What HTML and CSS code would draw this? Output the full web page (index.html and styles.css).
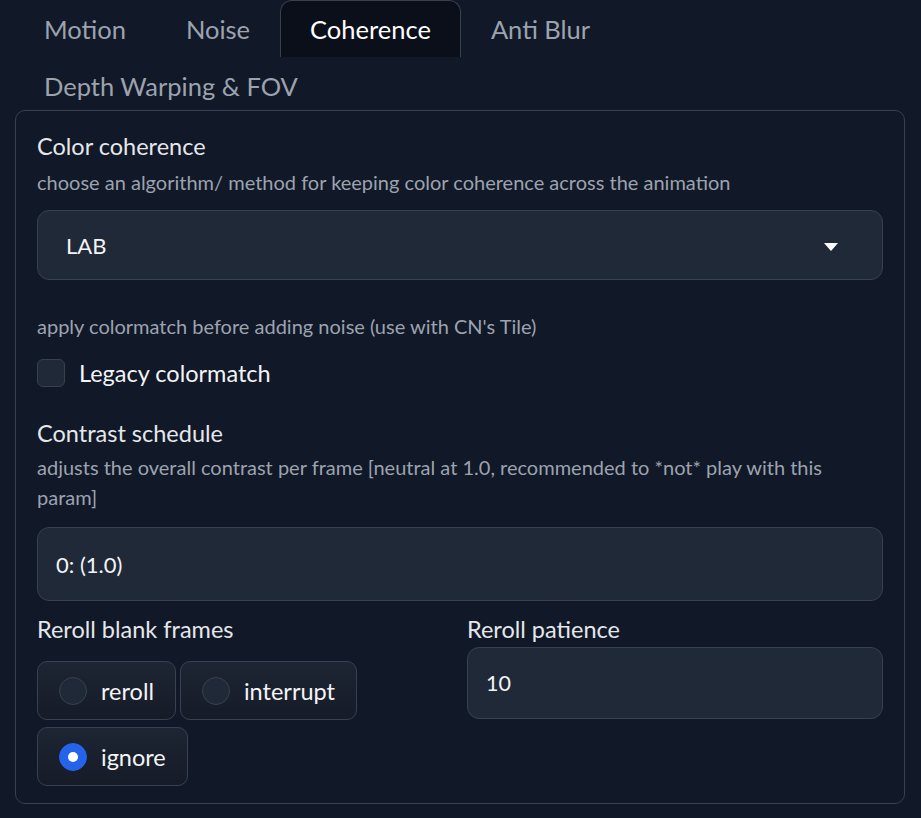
FILE: index.html
```html
<!DOCTYPE html>
<html lang="en">
<head>
<meta charset="utf-8">
<title>Coherence</title>
<link rel="stylesheet" href="styles.css">
</head>
<body>
<div class="tabs">
  <button class="tab">Motion</button>
  <button class="tab">Noise</button>
  <button class="tab selected">Coherence</button>
  <button class="tab">Anti Blur</button>
  <button class="tab">Depth Warping &amp; FOV</button>
</div>
<div class="panel">
  <div class="block">
    <div class="label">Color coherence</div>
    <div class="info">choose an algorithm/ method for keeping color coherence across the animation</div>
    <div class="dropdown">
      <span class="value">LAB</span>
      <svg class="caret" width="14" height="8" viewBox="0 0 14 8"><path d="M0 0 L14 0 L7 8 Z" fill="#ffffff"/></svg>
    </div>
  </div>
  <div class="block block-check">
    <div class="info">apply colormatch before adding noise (use with CN's Tile)</div>
    <label class="check-row"><span class="checkbox"></span><span class="check-text">Legacy colormatch</span></label>
  </div>
  <div class="block block-contrast">
    <div class="label">Contrast schedule</div>
    <div class="info">adjusts the overall contrast per frame [neutral at 1.0, recommended to *not* play with this param]</div>
    <div class="textbox">0: (1.0)</div>
  </div>
  <div class="row">
    <div class="col">
      <div class="label">Reroll blank frames</div>
      <div class="radios">
        <label class="radio-item"><span class="radio"></span><span>reroll</span></label>
        <label class="radio-item"><span class="radio"></span><span>interrupt</span></label>
        <label class="radio-item"><span class="radio on"></span><span>ignore</span></label>
      </div>
    </div>
    <div class="col">
      <div class="label">Reroll patience</div>
      <div class="number">10</div>
    </div>
  </div>
</div>
</body>
</html>
```

FILE: styles.css
```css
* { box-sizing: border-box; }
html, body { margin: 0; padding: 0; }
body {
  background: #111827;
  font-family: Lato, "Noto Sans", sans-serif;
  color: #e5e7eb;
  width: 921px;
  height: 818px;
  overflow: hidden;
}
.tabs {
  display: flex;
  flex-wrap: wrap;
  padding-left: 14px;
  margin-right: 16px;
  margin-bottom: -4px;
}
.tab {
  height: 57px;
  padding: 0 29px;
  background: transparent;
  border: 1px solid transparent;
  border-bottom: none;
  border-radius: 12px 12px 0 0;
  color: #9ca3af;
  font-family: inherit;
  font-size: 25.5px;
  cursor: pointer;
}
.tab.selected {
  background: #0b0f19;
  border-color: #374151;
  color: #ffffff;
}
.panel {
  margin: 0 16px 0 15px;
  border: 1px solid #374151;
  border-radius: 10px;
  padding: 20px 21px 17px;
}
.label {
  font-size: 23.5px;
  line-height: 30px;
  color: #e5e7eb;
}
.info {
  font-size: 20px;
  line-height: 30px;
  color: #9ca3af;
}
.block .label + .info { margin-top: 6px; }
.dropdown {
  margin-top: 13px;
  height: 70px;
  background: #1f2937;
  border: 1px solid #374151;
  border-radius: 12px;
  display: flex;
  align-items: center;
  justify-content: space-between;
  padding: 0 44px 0 28px;
  font-size: 22px;
  color: #f3f4f6;
}
.caret { display: block; margin-top: 3px; }
.block-check { margin-top: 31px; }
.check-row {
  display: flex;
  align-items: center;
  gap: 14px;
  margin-top: 18px;
  font-size: 23.5px;
  color: #f3f4f6;
}
.checkbox {
  width: 28px;
  height: 28px;
  border-radius: 6px;
  background: #1f2937;
  border: 1px solid #374151;
}
.block-contrast { margin-top: 31px; }
.block-contrast .label + .info { margin-top: 4px; }
.textbox {
  margin-top: 15px;
  height: 74px;
  background: #1f2937;
  border: 1px solid #374151;
  border-radius: 12px;
  display: flex;
  align-items: center;
  padding: 0 18px;
  font-size: 22px;
  color: #f3f4f6;
}
.row {
  display: grid;
  grid-template-columns: 408px 1fr;
  column-gap: 22px;
  margin-top: 13px;
}
.radios {
  display: flex;
  flex-wrap: wrap;
  gap: 7px 4px;
  margin-top: 17px;
}
.radio-item {
  display: flex;
  align-items: center;
  gap: 14px;
  height: 59px;
  padding: 0 21px;
  border: 1px solid #374151;
  border-radius: 10px;
  background: linear-gradient(#1e2533, #151b27);
  font-size: 23.5px;
  color: #f3f4f6;
}
.radio {
  width: 28px;
  height: 28px;
  border-radius: 50%;
  background: #1f2937;
  border: 1px solid #374151;
}
.radio.on {
  background: #2563eb;
  border-color: #2563eb;
  position: relative;
}
.radio.on::after {
  content: "";
  position: absolute;
  left: 8px;
  top: 8px;
  width: 10px;
  height: 10px;
  border-radius: 50%;
  background: #ffffff;
}
.number {
  margin-top: 3px;
  height: 72px;
  background: #1f2937;
  border: 1px solid #374151;
  border-radius: 12px;
  display: flex;
  align-items: center;
  padding: 0 18px;
  font-size: 21.5px;
  color: #f3f4f6;
}
```
